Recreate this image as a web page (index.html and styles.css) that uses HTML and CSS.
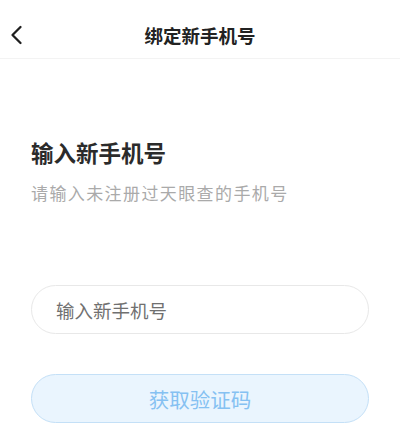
FILE: index.html
```html
<!DOCTYPE html>
<html lang="zh-CN">
<head>
<meta charset="utf-8">
<title>绑定新手机号</title>
<link rel="stylesheet" href="styles.css">
</head>
<body>
<div class="page">
  <header class="nav">
    <button class="back" aria-label="返回">
      <svg width="14" height="20" viewBox="0 0 14 20"><path d="M10.5 2 L2.5 10 L10.5 18" fill="none" stroke="#1f1f1f" stroke-width="2.3" stroke-linecap="round" stroke-linejoin="round"/></svg>
    </button>
    <h1 class="nav-title">绑定新手机号</h1>
  </header>
  <main class="content">
    <h2 class="heading">输入新手机号</h2>
    <p class="sub">请输入未注册过天眼查的手机号</p>
    <div class="field"><input class="phone" type="tel" placeholder="输入新手机号"></div>
    <button class="submit">获取验证码</button>
  </main>
</div>
</body>
</html>
```
FILE: styles.css
```css
* { box-sizing: border-box; }
html, body { margin: 0; padding: 0; background: #fff; }
body {
  font-family: "Noto Sans CJK SC", "Noto Sans", sans-serif;
  width: 400px;
  height: 439px;
  overflow: hidden;
}
.nav {
  position: relative;
  height: 59px;
  border-bottom: 1px solid #f3f3f3;
  display: flex;
  align-items: center;
  justify-content: center;
}
.back {
  position: absolute;
  left: 10px;
  top: 25px;
  padding: 0;
  border: 0;
  background: none;
  display: flex;
}
.nav-title {
  margin: 0;
  font-size: 18.5px;
  font-weight: 600;
  color: #222;
  line-height: 24px;
  padding-top: 12px;
}
.content {
  padding: 0 31px;
  display: flex;
  flex-direction: column;
}
.heading {
  margin: 77px 0 0;
  font-size: 22.5px;
  line-height: 32px;
  font-weight: 700;
  color: #2b2b2b;
}
.sub {
  margin: 13px 0 0;
  font-size: 17px;
  line-height: 24px;
  letter-spacing: 1.4px;
  color: #aaaaaa;
}
.field {
  margin-top: 80px;
  height: 49px;
  border: 1px solid #e8e8e8;
  border-radius: 25px;
  display: flex;
  align-items: center;
  padding-left: 24px;
}
.phone {
  border: 0;
  outline: 0;
  background: transparent;
  font-family: inherit;
  font-size: 18.5px;
  color: #333;
  width: 100%;
  padding: 0;
}
.phone::placeholder { color: #707070; }
.submit {
  margin-top: 40px;
  height: 49px;
  border: 1px solid #c4e0f7;
  border-radius: 25px;
  background: #eaf5fe;
  color: #85c1f2;
  font-family: inherit;
  font-size: 20.5px;
  padding: 0;
}
```
